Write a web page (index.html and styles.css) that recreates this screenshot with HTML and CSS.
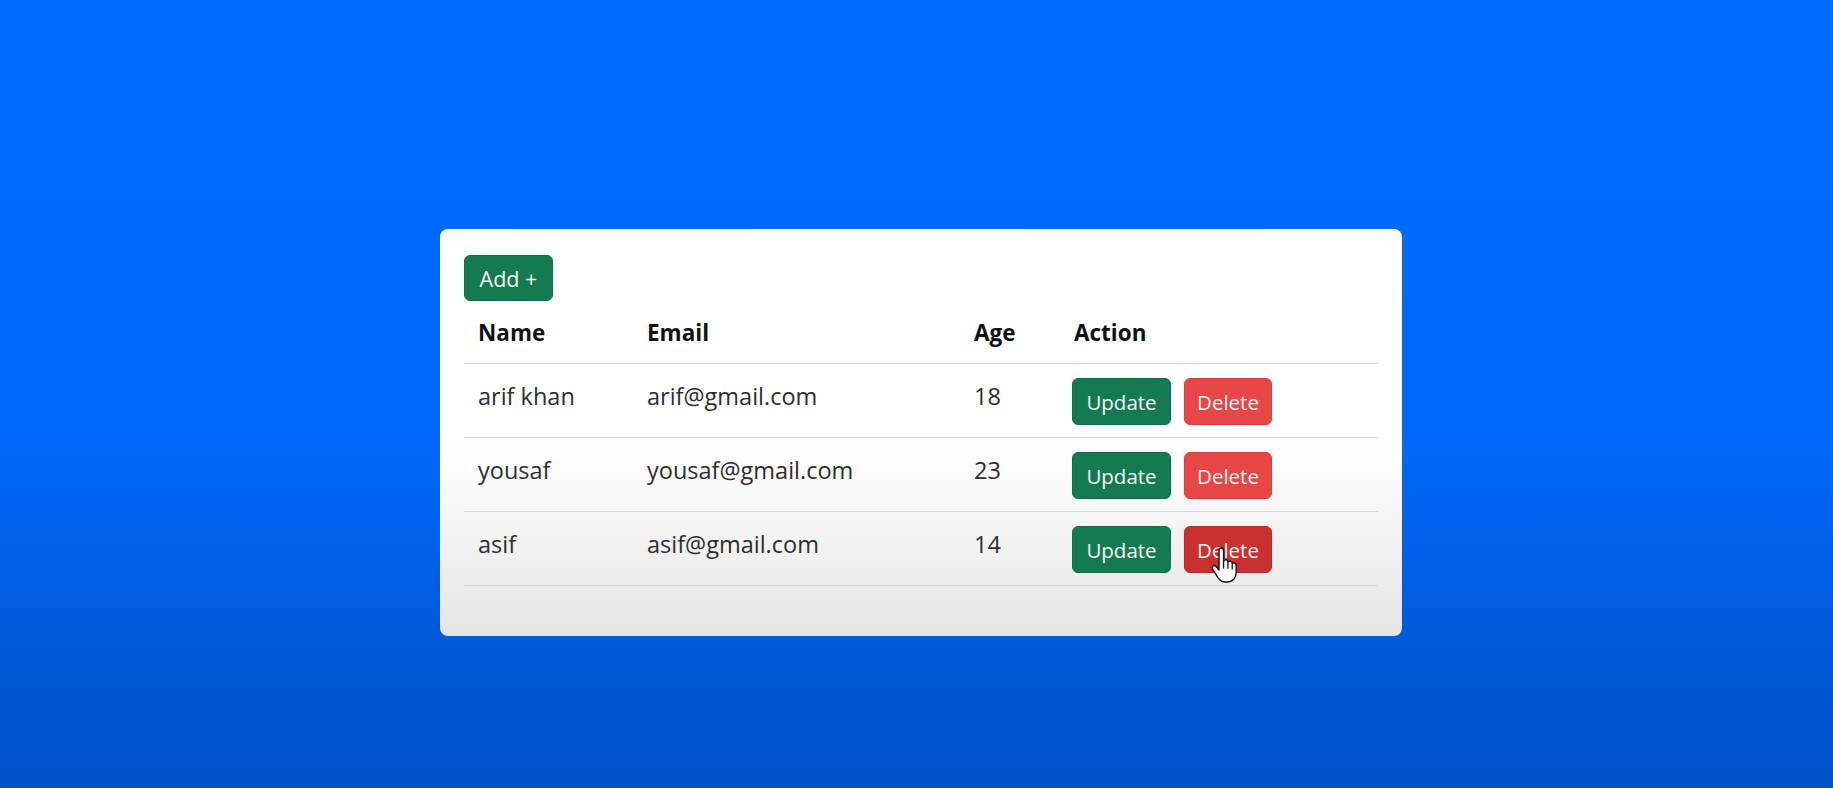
FILE: index.html
```html
<!DOCTYPE html>
<html lang="en">
<head>
<meta charset="utf-8">
<title>Users</title>
<link rel="stylesheet" href="styles.css">
</head>
<body>
<main class="page">
  <section class="card">
    <button class="btn btn-success btn-add">Add +</button>
    <table class="table">
      <thead>
        <tr>
          <th class="col-name">Name</th>
          <th class="col-email">Email</th>
          <th class="col-age">Age</th>
          <th class="col-action">Action</th>
        </tr>
      </thead>
      <tbody>
        <tr>
          <td>arif khan</td>
          <td>arif@gmail.com</td>
          <td>18</td>
          <td class="actions"><button class="btn btn-success">Update</button><button class="btn btn-danger">Delete</button></td>
        </tr>
        <tr>
          <td>yousaf</td>
          <td>yousaf@gmail.com</td>
          <td>23</td>
          <td class="actions"><button class="btn btn-success">Update</button><button class="btn btn-danger">Delete</button></td>
        </tr>
        <tr>
          <td>asif</td>
          <td>asif@gmail.com</td>
          <td>14</td>
          <td class="actions"><button class="btn btn-success">Update</button><span class="hover-wrap"><button class="btn btn-danger is-hover">Delete</button><svg class="cursor" width="28" height="36" viewBox="0 0 28 36" xmlns="http://www.w3.org/2000/svg"><path d="M8 3.5c0-1.4 1-2.5 2.3-2.5s2.3 1.1 2.3 2.5v10.2c.5-.6 1.300-.9 2-.9 1.3 0 2.2.9 2.3 2.1.5-.5 1.2-.8 2-.8 1.3 0 2.3 1 2.3 2.3.4-.3 1-.5 1.6-.5 1.4 0 2.4 1.1 2.4 2.5v7.2c0 5.3-3.6 9.4-8.7 9.4h-2.2c-3 0-5.300-1.4-7-3.9L1.6 22.2c-.8-1.1-.6-2.5.4-3.2 1-.8 2.4-.6 3.2.5L8 23V3.5z" fill="#fff" stroke="#111" stroke-width="1.4" stroke-linejoin="round"/><path d="M12.6 14v7M16.9 15.2v6M21.2 17.4v4.6" stroke="#111" stroke-width="1.3" stroke-linecap="round"/></svg></span></td>
        </tr>
      </tbody>
    </table>
  </section>
</main>
</body>
</html>
```
FILE: styles.css
```css
* { box-sizing: border-box; }

html, body {
  margin: 0;
  height: 100%;
}

body {
  background: linear-gradient(to bottom, #006cff 0%, #0068fb 55%, #0058d6 85%, #0051c6 100%);
  font-family: "Open Sans", "Liberation Sans", sans-serif;
  color: #2e2e2e;
  overflow: hidden;
}

.page {
  display: flex;
  justify-content: center;
  padding-top: 229px;
  padding-left: 9px;
}

.card {
  width: 962px;
  height: 407px;
  padding: 26px 24px 0 24px;
  border-radius: 8px;
  background: linear-gradient(to bottom, #ffffff 0%, #ffffff 52%, #f3f3f3 75%, #e4e4e4 100%);
}

.btn {
  display: inline-flex;
  align-items: center;
  justify-content: center;
  height: 47px;
  padding: 0 15px;
  border: 1px solid transparent;
  border-radius: 6px;
  font-family: "Open Sans", "Liberation Sans", sans-serif;
  font-size: 20.5px;
  color: #f4fbf6;
  cursor: pointer;
}

.btn-success {
  background: #137a52;
  border-color: #0f6f48;
}

.btn-danger {
  background: #e84646;
  border-color: #dc3d3d;
  color: #fff3f3;
}

.btn-danger.is-hover {
  background: #c9302f;
  border-color: #b82a2a;
}

.btn-add {
  height: 46px;
  width: 89px;
  padding: 0;
  font-size: 21.5px;
}

.table {
  width: 914px;
  border-collapse: collapse;
  margin-top: 0;
}

.table th,
.table td {
  text-align: left;
  vertical-align: top;
  padding: 14px 14px 12px 14px;
  font-size: 23.5px;
  line-height: 36px;
  white-space: nowrap;
}

.table th {
  font-weight: 700;
  font-size: 22.5px;
  color: #111;
  border-bottom: 1px solid #d9d9d9;
}

.table td {
  border-bottom: 1px solid #d6d6d6;
  height: 74px;
}

.col-name { width: 169px; }
.col-email { width: 327px; }
.col-age { width: 100px; }

.actions .btn {
  width: 99px;
  padding: 0;
  margin-left: -2px;
}

.actions .btn-danger {
  width: 88px;
  margin-left: 13px;
}

.hover-wrap {
  position: relative;
  display: inline-block;
  margin-left: 13px;
}

.hover-wrap .btn-danger {
  margin-left: 0;
}

.cursor {
  position: absolute;
  left: 27px;
  top: 21px;
}
```
